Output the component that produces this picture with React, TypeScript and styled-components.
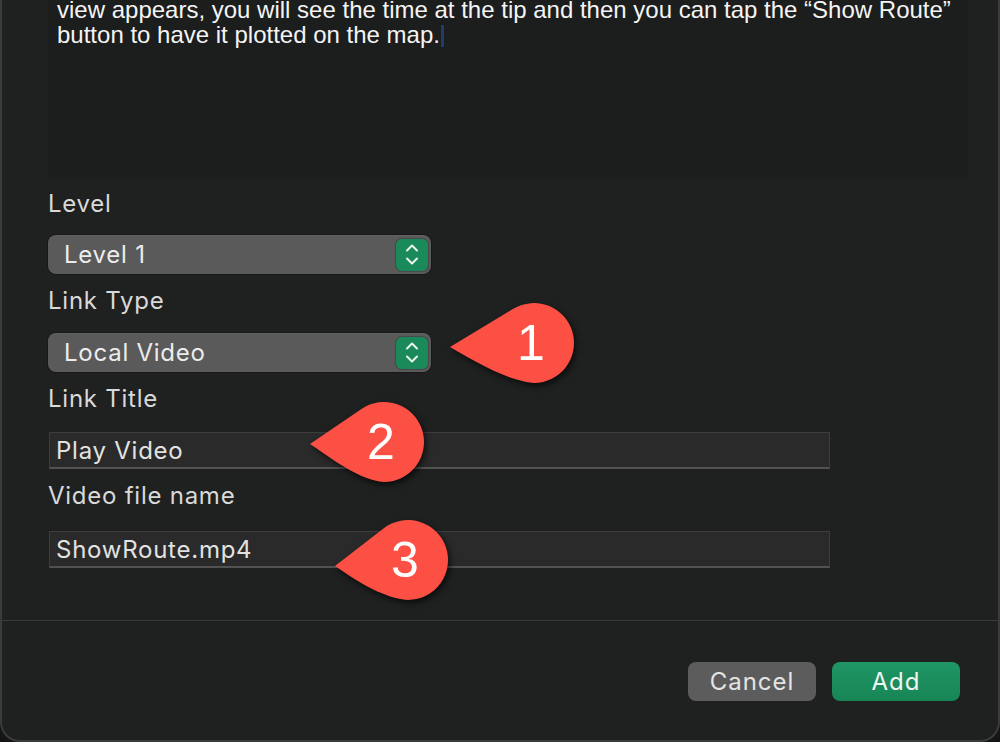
import React from 'react';
import styled, { createGlobalStyle } from 'styled-components';

const Global = createGlobalStyle`
  html, body { margin: 0; padding: 0; background: #151515; }
  body { width: 1000px; height: 742px; overflow: hidden; font-family: Inter, "Liberation Sans", sans-serif; }
  * { box-sizing: border-box; }
`;

const Stage = styled.div`
  position: relative;
  width: 1000px;
  height: 742px;
`;

const Window = styled.div`
  width: 1000px;
  height: 742px;
  background: #1f2020;
  border: 2px solid #3a3b3b;
  border-top: none;
  border-radius: 0 0 20px 20px;
  display: flex;
  flex-direction: column;
  overflow: hidden;
`;

const Content = styled.div`
  flex: 1;
  display: flex;
  flex-direction: column;
  align-items: flex-start;
  padding: 0 30px 0 46px;
`;

const Description = styled.div`
  align-self: stretch;
  height: 177px;
  background: #1c1d1d;
  overflow: hidden;
  padding: 0 4px 0 9px;
  font-family: "Liberation Sans", Arial, sans-serif;
  font-size: 24px;
  line-height: 25px;
  color: #f4f4f4;
`;

const DescLine = styled.div<{ $first?: boolean }>`
  white-space: nowrap;
  margin-top: ${p => (p.$first ? '-3px' : '0')};
`;

const Caret = styled.span`
  display: inline-block;
  width: 3px;
  height: 22px;
  margin-left: 1px;
  vertical-align: -4px;
  background: #1f3b70;
`;

const Label = styled.div<{ $after: number }>`
  margin-top: 13px;
  margin-bottom: ${p => p.$after}px;
  height: 28px;
  line-height: 28px;
  font-size: 24px;
  letter-spacing: 0.75px;
  color: #d9d9d9;
`;

const Popup = styled.div`
  width: 383px;
  height: 39px;
  border-radius: 8px;
  background: #5a5a5a;
  box-shadow: 0 0 0 1px rgba(0, 0, 0, 0.25), inset 0 1px 0 rgba(255, 255, 255, 0.05);
  display: flex;
  align-items: center;
  justify-content: space-between;
  padding: 0 3px 0 16px;
  font-size: 24px;
  letter-spacing: 0.75px;
  color: #ececec;
`;

const Stepper = styled.div`
  width: 32px;
  height: 32px;
  border-radius: 6px;
  background: #1b8a5b;
  box-shadow: 0 0 0 1px rgba(0, 0, 0, 0.2);
  display: flex;
  align-items: center;
  justify-content: center;
`;

const Field = styled.div`
  width: 781px;
  height: 37px;
  margin-left: 1px;
  background: #2a2a2a;
  border: 1px solid #3d3d3d;
  border-bottom: 2px solid #525252;
  padding-left: 6px;
  display: flex;
  align-items: center;
  font-size: 24px;
  letter-spacing: 0.75px;
  color: #e2e2e2;
`;

const Divider = styled.div`
  height: 1px;
  background: #383939;
`;

const Footer = styled.div`
  flex: 0 0 119px;
  display: flex;
  justify-content: flex-end;
  align-items: flex-start;
  gap: 16px;
  padding: 41px 38px 0 0;
`;

const Button = styled.div<{ $primary?: boolean }>`
  width: 128px;
  height: 39px;
  border-radius: 8px;
  display: flex;
  align-items: center;
  justify-content: center;
  font-size: 24px;
  letter-spacing: 1px;
  color: ${p => (p.$primary ? '#eef6f1' : '#e4e4e4')};
  background: ${p => (p.$primary ? 'linear-gradient(#1f9565, #188656)' : '#5c5c5c')};
`;

const CalloutBox = styled.div`
  position: absolute;
  height: 80px;
  filter: drop-shadow(2px 3px 3px rgba(0, 0, 0, 0.65));
`;

const CalloutNumber = styled.span`
  position: absolute;
  top: 0;
  width: 80px;
  height: 80px;
  padding-right: 6px;
  display: flex;
  align-items: center;
  justify-content: center;
  font-family: "Liberation Sans", Arial, sans-serif;
  font-size: 50px;
  line-height: 80px;
  color: #ffffff;
`;

function Chevrons() {
  return (
    <svg width="32" height="32" viewBox="0 0 32 32" fill="none">
      <polyline points="11,11.5 16,6.5 21,11.5" stroke="#e9f5ee" strokeWidth="2" strokeLinecap="round" strokeLinejoin="round" />
      <polyline points="11,19.5 16,24.5 21,19.5" stroke="#e9f5ee" strokeWidth="2" strokeLinecap="round" strokeLinejoin="round" />
    </svg>
  );
}

function Callout({ n, left, top, width, drop }: { n: string; left: number; top: number; width: number; drop: number }) {
  const cx = width - 40;
  const cy = 40;
  const r = 40;
  const px = 0;
  const py = 40 + drop;
  const dx = cx - px;
  const dy = cy - py;
  const d = Math.sqrt(dx * dx + dy * dy);
  const base = Math.atan2(dy, dx);
  const a = Math.asin(r / d);
  const L = Math.sqrt(d * d - r * r);
  const ang = base - a;
  const tx = px + L * Math.cos(ang);
  const ty = py + L * Math.sin(ang);
  const path = `M${px},${py} L${tx.toFixed(2)},${ty.toFixed(2)} A${r},${r} 0 1 1 ${cx},${cy + r} C${cx - 24},${cy + r - 2} ${cx * 0.36},${py + 18} ${px},${py} Z`;
  return (
    <CalloutBox style={{ left, top, width }}>
      <svg width={width} height={80} viewBox={`0 0 ${width} 80`}>
        <path d={path} fill="#fd5044" />
      </svg>
      <CalloutNumber style={{ left: cx - 40 }}>{n}</CalloutNumber>
    </CalloutBox>
  );
}

export default function App() {
  return (
    <Stage>
      <Global />
      <Window>
        <Content>
          <Description>
            <DescLine $first>view appears, you will see the time at the tip and then you can tap the “Show Route”</DescLine>
            <DescLine>button to have it plotted on the map.<Caret /></DescLine>
          </Description>
          <Label $after={17}>Level</Label>
          <Popup>
            <span>Level 1</span>
            <Stepper><Chevrons /></Stepper>
          </Popup>
          <Label $after={18}>Link Type</Label>
          <Popup>
            <span>Local Video</span>
            <Stepper><Chevrons /></Stepper>
          </Popup>
          <Label $after={19}>Link Title</Label>
          <Field>Play Video</Field>
          <Label $after={21}>Video file name</Label>
          <Field>ShowRoute.mp4</Field>
        </Content>
        <Divider />
        <Footer>
          <Button>Cancel</Button>
          <Button $primary>Add</Button>
        </Footer>
      </Window>
      <Callout n="1" left={450} top={303} width={124} drop={4} />
      <Callout n="2" left={310} top={402} width={114} drop={2} />
      <Callout n="3" left={335} top={520} width={113} drop={6} />
    </Stage>
  );
}
